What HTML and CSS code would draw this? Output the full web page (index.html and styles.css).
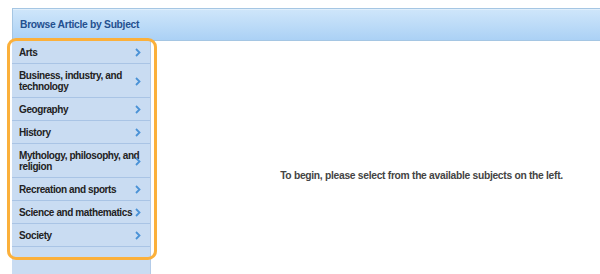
FILE: index.html
```html
<!DOCTYPE html>
<html lang="en">
<head>
    <meta charset="UTF-8">
    <meta name="viewport" content="width=device-width, initial-scale=1.0">
    <title>Browse Article by Subject</title>
    <link rel="stylesheet" href="styles.css">
</head>
<body>
<div class="browser">
    <header class="browse-head">Browse Article by Subject</header>
    <div class="browse-body">
        <ul class="subjects">
            <li><span>Arts</span><svg class="chev" viewBox="0 0 6 9"><path d="M1 1l3.5 3.5L1 8"/></svg></li>
            <li><span>Business, industry, and technology</span><svg class="chev" viewBox="0 0 6 9"><path d="M1 1l3.5 3.5L1 8"/></svg></li>
            <li><span>Geography</span><svg class="chev" viewBox="0 0 6 9"><path d="M1 1l3.5 3.5L1 8"/></svg></li>
            <li><span>History</span><svg class="chev" viewBox="0 0 6 9"><path d="M1 1l3.5 3.5L1 8"/></svg></li>
            <li><span>Mythology, philosophy, and religion</span><svg class="chev" viewBox="0 0 6 9"><path d="M1 1l3.5 3.5L1 8"/></svg></li>
            <li><span>Recreation and sports</span><svg class="chev" viewBox="0 0 6 9"><path d="M1 1l3.5 3.5L1 8"/></svg></li>
            <li><span>Science and mathematics</span><svg class="chev" viewBox="0 0 6 9"><path d="M1 1l3.5 3.5L1 8"/></svg></li>
            <li><span>Society</span><svg class="chev" viewBox="0 0 6 9"><path d="M1 1l3.5 3.5L1 8"/></svg></li>
        </ul>
        <div class="intro">
            <p>To begin, please select from the available subjects on the left.</p>
        </div>
    </div>
    <div class="highlight"></div>
</div>
</body>
</html>
```

FILE: styles.css
```css
html, body {
    margin: 0;
    padding: 0;
    height: 100%;
    overflow: hidden;
    background: #fff;
    font-family: 'Liberation Sans', Arial, sans-serif;
}
.browser {
    position: relative;
    padding: 8px 0 0 12px;
    height: 100%;
    box-sizing: border-box;
    display: flex;
    flex-direction: column;
}
.browse-head {
    height: 31px;
    line-height: 32px;
    padding-left: 7px;
    font-size: 10.3px;
    letter-spacing: -0.3px;
    font-weight: bold;
    color: #24508f;
    background: linear-gradient(#cfe6fa, #abd1f5);
    border: 1px solid #a5c6e3;
    border-right: none;
    box-shadow: inset 0 1px 0 #e0effc;
}
.browse-body {
    flex: 1;
    display: flex;
}
.subjects {
    list-style: none;
    margin: 0;
    padding: 0;
    width: 138px;
    background: #c9dcf2;
    border-right: 1px solid #b3cbe8;
}
.subjects li {
    position: relative;
    padding: 6px 2px 5px 7px;
    line-height: 11px;
    font-size: 10px;
    letter-spacing: -0.4px;
    font-weight: bold;
    color: #222;
    border-bottom: 1px solid #a9c4e5;
}
.subjects li span {
    display: block;
}
.chev {
    position: absolute;
    right: 9px;
    top: 50%;
    margin-top: -4px;
    width: 6px;
    height: 9px;
}
.chev path {
    fill: none;
    stroke: #4a92d6;
    stroke-width: 1.8;
}
.intro {
    flex: 1;
    display: flex;
    align-items: center;
    justify-content: center;
    padding: 36px 0 0 92px;
}
.intro p {
    margin: 0;
    font-size: 10.3px;
    letter-spacing: -0.3px;
    font-weight: bold;
    color: #444;
}
.highlight {
    position: absolute;
    left: 7px;
    top: 38px;
    width: 144px;
    height: 216px;
    border: 3px solid #fbb03b;
    border-radius: 9px;
}
```
